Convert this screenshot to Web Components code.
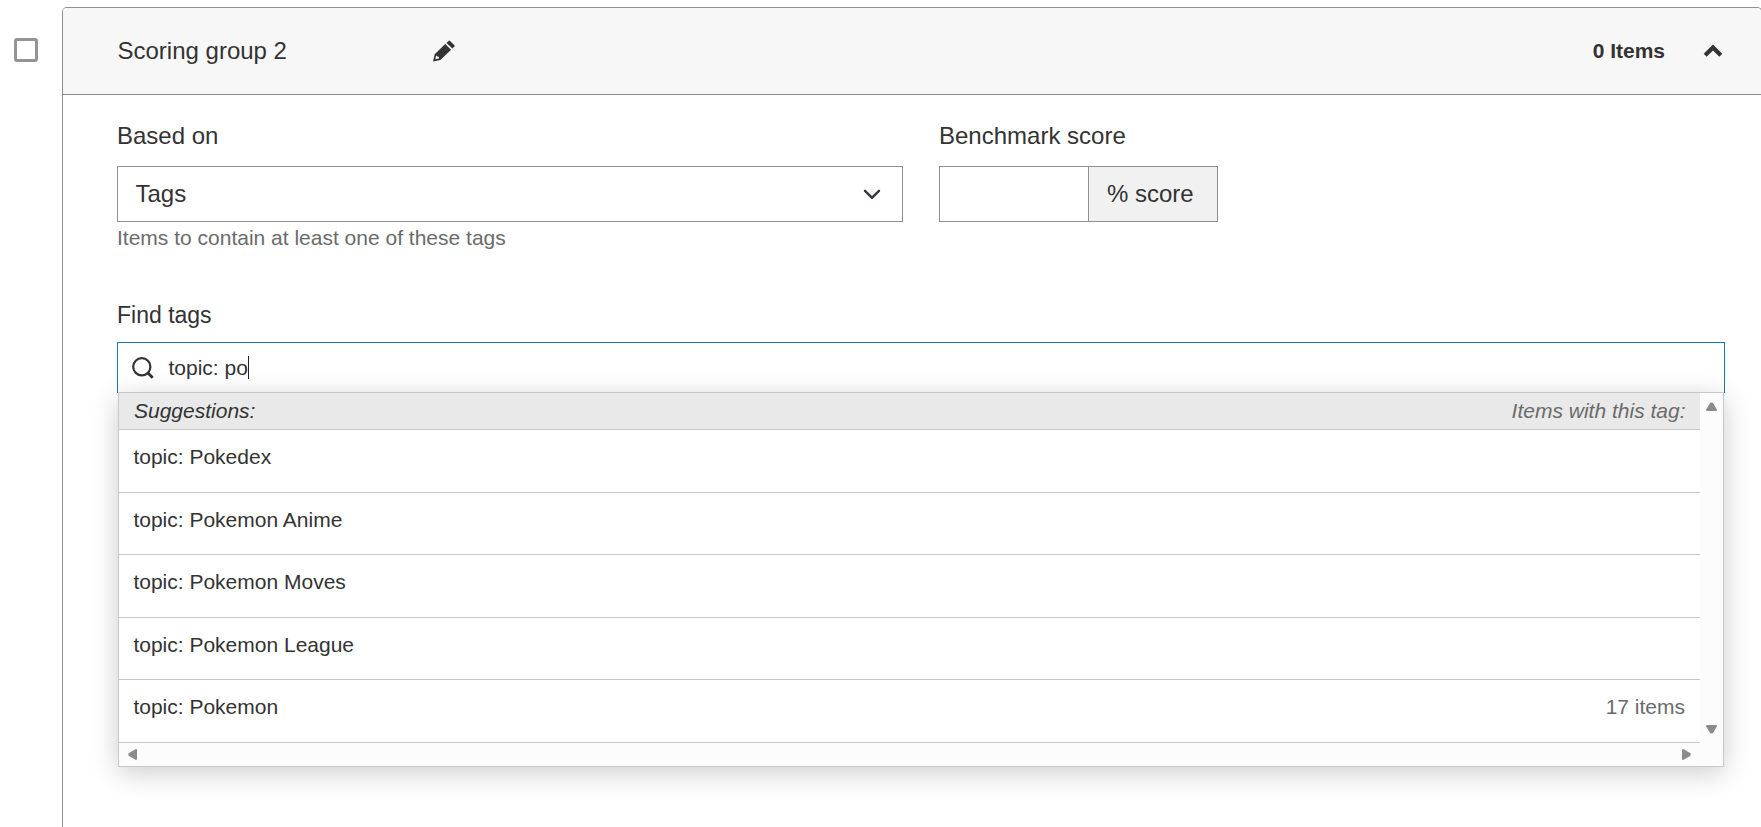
<!DOCTYPE html>
<html lang="en">

<head>
  <meta charset="UTF-8">
  <meta name="viewport" content="width=device-width, initial-scale=1.0">
  <title>Scoring groups</title>
  <style>
    body {
      margin: 0;
      height: 827px;
      overflow: hidden;
      background: #fff;
      color: #333;
      font: 24px/28px "Liberation Sans", Arial, sans-serif;
    }
  </style>
</head>

<body>
  <template id="group-template">
    <style>
      :host {
        display: flex;
        width: 1762px;
        height: 100%;
        padding: 7px 0 0 14px;
        box-sizing: border-box;
      }
      .check {
        flex: none;
        box-sizing: border-box;
        width: 24px;
        height: 24px;
        margin: 31px 24px 0 0;
        border: 3px solid #949494;
        border-radius: 3px;
        background: #fff;
      }
      .panel {
        flex: 1;
        box-sizing: border-box;
        border: 1px solid #8f8f8f;
        border-bottom: 0;
        border-radius: 5px 5px 0 0;
        overflow: hidden;
      }
      header {
        display: flex;
        align-items: center;
        height: 87px;
        padding: 0 38px 0 54.5px;
        box-sizing: border-box;
        border-bottom: 1px solid #8f8f8f;
        background: #f7f7f7;
      }
      .name {
        width: 315.5px;
      }
      .count {
        margin-left: auto;
        margin-right: 38px;
        font-size: 21px;
        font-weight: bold;
      }
      svg {
        display: block;
      }
      .body {
        padding: 27px 36px 0 54px;
      }
    </style>
    <span class="check"></span>
    <section class="panel">
      <header>
        <span class="name"><slot name="name"></slot></span>
        <svg width="22" height="22" viewBox="0 0 22 22" fill="#333">
          <path d="M15.6.9a1 1 0 0 1 1.4 0l4.4 4.3a1 1 0 0 1 0 1.4l-2 2-5.9-5.7z" />
          <path fill-rule="evenodd" d="M12.2 4l5.9 5.7L7.4 20 0 21.6l1.7-7.3zM3.1 15.6l-.8 3.6 3.7-.8-.2-1.6-1.4-.2z" />
        </svg>
        <span class="count"><slot name="count"></slot></span>
        <svg width="20" height="14" viewBox="0 0 20 14" fill="none" stroke="#333" stroke-width="4.2">
          <path d="M2.2 11.2L10 3.4l7.8 7.8" />
        </svg>
      </header>
      <div class="body"><slot></slot></div>
    </section>
  </template>

  <template id="field-template">
    <style>
      :host {
        display: flex;
        flex-direction: column;
      }
      label {
        margin-bottom: var(--label-gap, 16px);
        font-size: var(--label-size, 24px);
      }
      .hint {
        font-size: 21px;
        line-height: 24px;
        padding-top: 4px;
        color: #6b6b6b;
      }
    </style>
    <label></label>
    <slot></slot>
    <span class="hint"><slot name="hint"></slot></span>
  </template>

  <template id="select-template">
    <style>
      :host {
        display: flex;
        align-items: center;
        justify-content: space-between;
        box-sizing: border-box;
        width: 786px;
        height: 56px;
        padding: 0 21px 0 17.5px;
        border: 1px solid #8f8f8f;
      }
    </style>
    <slot></slot>
    <svg width="18" height="11" viewBox="0 0 18 11" fill="none" stroke="#333b42" stroke-width="2.4" stroke-linecap="round" stroke-linejoin="round">
      <path d="M2 1.8l7 7 7-7" />
    </svg>
  </template>

  <template id="percent-template">
    <style>
      :host {
        display: flex;
        box-sizing: border-box;
        width: 279px;
        height: 56px;
        border: 1px solid #8f8f8f;
      }
      .value {
        width: 148px;
      }
      .unit {
        flex: 1;
        display: flex;
        align-items: center;
        padding-left: 18px;
        border-left: 1px solid #8f8f8f;
        background: #f1f1f1;
      }
    </style>
    <span class="value"></span>
    <span class="unit"><slot></slot></span>
  </template>

  <template id="search-template">
    <style>
      :host {
        display: block;
        position: relative;
        font-size: 21px;
        line-height: 24px;
      }
      .box {
        display: flex;
        align-items: center;
        box-sizing: border-box;
        height: 51px;
        padding-left: 14px;
        border: 1px solid #1978b3;
        border-bottom: 0;
      }
      svg {
        margin-right: 14.5px;
      }
      .text {
        margin-top: -1px;
      }
      .caret {
        width: 1px;
        height: 23px;
        margin-top: -1px;
        background: #222;
      }
      /* the list overlaps the bottom edge of the box */
      .list {
        position: absolute;
        top: 50px;
        left: 1px;
        right: 1px;
      }
    </style>
    <div class="box">
      <svg width="22" height="22" viewBox="0 0 22 22" fill="none" stroke="#333" stroke-width="2.2">
        <circle cx="9.8" cy="9.8" r="8.6" />
        <path d="M15.9 15.9l4.8 4.8" stroke-width="2.8" />
      </svg>
      <span class="text"></span><span class="caret"></span>
    </div>
    <div class="list"><slot></slot></div>
  </template>

  <template id="list-template">
    <style>
      :host {
        display: grid;
        grid-template-columns: 1fr 23px;
        grid-template-rows: 350px 23px;
        border: 1px solid #c8c8c8;
        background: #fff;
        box-shadow: 0 6px 26px rgba(0, 0, 0, .2);
      }
      .head {
        display: flex;
        justify-content: space-between;
        align-items: center;
        box-sizing: border-box;
        height: 37px;
        padding: 0 14.5px 0 15px;
        border-bottom: 1px solid #c8c8c8;
        background: #e9e9e9;
        font-style: italic;
      }
      .head span + span {
        color: #6b6b6b;
      }
      .bar {
        display: flex;
        justify-content: space-between;
        align-items: center;
        background: #fcfcfc;
      }
      .bar.v {
        flex-direction: column;
        padding: 9px 0;
      }
      .bar.h {
        padding: 0 9px;
      }
      .corner {
        background: #fcfcfc;
      }
      svg {
        display: block;
        fill: #8b8b8b;
        stroke: #8b8b8b;
        stroke-width: 2;
        stroke-linejoin: round;
      }
    </style>
    <div class="rows">
      <div class="head"><span>Suggestions:</span><span>Items with this tag:</span></div>
      <slot></slot>
    </div>
    <div class="bar v">
      <svg width="11" height="9" viewBox="0 0 11 9"><path d="M1 8L4.9 1.4h1.2L10 8z" /></svg>
      <svg width="11" height="9" viewBox="0 0 11 9"><path d="M1 1h9L6.1 7.6H4.9z" /></svg>
    </div>
    <div class="bar h">
      <svg width="9" height="11" viewBox="0 0 9 11"><path d="M8 1v9L1.4 6.1V4.9z" /></svg>
      <svg width="9" height="11" viewBox="0 0 9 11"><path d="M1 1v9l6.6-3.9V4.9z" /></svg>
    </div>
    <div class="corner"></div>
  </template>

  <template id="item-template">
    <style>
      :host {
        display: flex;
        justify-content: space-between;
        box-sizing: border-box;
        height: 62.6px;
        padding: 15px 15px 0 14.4px;
        border-bottom: 1px solid #c8c8c8;
      }
      .items {
        color: #6b6b6b;
      }
    </style>
    <span><slot></slot></span>
    <span class="items"></span>
  </template>

  <template id="row-template">
    <style>
      :host {
        display: flex;
        gap: 36px;
        height: 179px;
      }
    </style>
    <slot></slot>
  </template>

  <scoring-group>
    <span slot="name">Scoring group 2</span>
    <span slot="count">0 Items</span>
    <field-row>
      <form-field label="Based on">
        <select-box>Tags</select-box>
        <span slot="hint">Items to contain at least one of these tags</span>
      </form-field>
      <form-field label="Benchmark score">
        <percent-input>% score</percent-input>
      </form-field>
    </field-row>
    <form-field label="Find tags" style="--label-gap: 13px; --label-size: 23px">
      <tag-search value="topic: po">
        <suggestion-list>
          <suggestion-item>topic: Pokedex</suggestion-item>
          <suggestion-item>topic: Pokemon Anime</suggestion-item>
          <suggestion-item>topic: Pokemon Moves</suggestion-item>
          <suggestion-item>topic: Pokemon League</suggestion-item>
          <suggestion-item items="17 items">topic: Pokemon</suggestion-item>
        </suggestion-list>
      </tag-search>
    </form-field>
  </scoring-group>

  <script>
    class BaseElement extends HTMLElement {
      constructor() {
        super()
        const template = document.querySelector(this.constructor.template)
        this.attachShadow({ mode: 'open' }).appendChild(template.content.cloneNode(true))
      }
      // copy an attribute of the host into a node of the shadow tree
      fill(selector, name) {
        this.shadowRoot.querySelector(selector).textContent = this.getAttribute(name) ?? ''
      }
    }

    class ScoringGroup extends BaseElement {
      static template = '#group-template'
    }

    class FieldRow extends BaseElement {
      static template = '#row-template'
    }

    class FormField extends BaseElement {
      static template = '#field-template'
      connectedCallback() {
        this.fill('label', 'label')
      }
    }

    class SelectBox extends BaseElement {
      static template = '#select-template'
    }

    class PercentInput extends BaseElement {
      static template = '#percent-template'
    }

    class TagSearch extends BaseElement {
      static template = '#search-template'
      connectedCallback() {
        this.fill('.text', 'value')
      }
    }

    class SuggestionList extends BaseElement {
      static template = '#list-template'
    }

    class SuggestionItem extends BaseElement {
      static template = '#item-template'
      connectedCallback() {
        this.fill('.items', 'items')
      }
    }

    customElements.define('scoring-group', ScoringGroup)
    customElements.define('field-row', FieldRow)
    customElements.define('form-field', FormField)
    customElements.define('select-box', SelectBox)
    customElements.define('percent-input', PercentInput)
    customElements.define('tag-search', TagSearch)
    customElements.define('suggestion-list', SuggestionList)
    customElements.define('suggestion-item', SuggestionItem)
  </script>
</body>

</html>
